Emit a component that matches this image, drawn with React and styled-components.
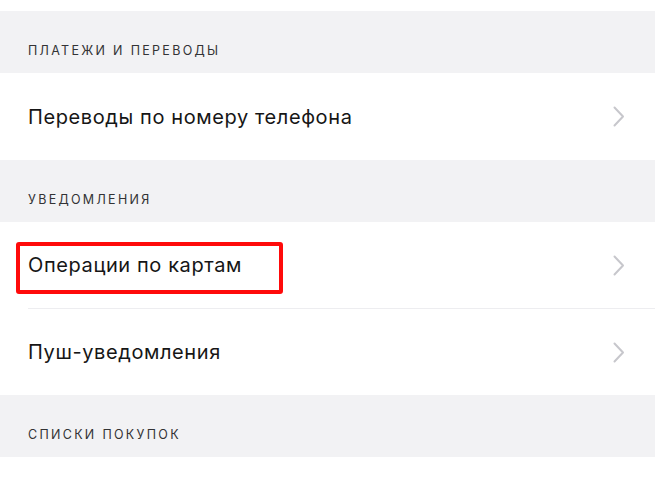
import React from "react";
import styled, {createGlobalStyle} from "styled-components";

const GlobalStyle = createGlobalStyle`
  html, body {
    margin: 0;
    padding: 0;
    background: #ffffff;
  }
  body {
    font-family: Inter, "Noto Sans", "Liberation Sans", sans-serif;
    -webkit-font-smoothing: antialiased;
  }
`

const Page = styled.div`
  width: 655px;
  height: 480px;
  overflow: hidden;
  padding-top: 11px;
  box-sizing: border-box;
  background: #ffffff;
`

const SectionHeader = styled.div`
  height: 62px;
  box-sizing: border-box;
  display: flex;
  align-items: flex-end;
  padding: 0 28px 14px;
  background: #f2f2f4;
  color: #333335;
  font-size: 12.5px;
  line-height: 16px;
  letter-spacing: 2.3px;
  text-transform: uppercase;
`

const Row = styled.div`
  height: ${p => p.$height || 86}px;
  display: flex;
  align-items: center;
  justify-content: space-between;
  padding: 0 30px 0 28px;
  box-sizing: border-box;
  background: #ffffff;
`

const Divider = styled.div`
  height: 1px;
  margin-left: 28px;
  background: #ededf0;
`

const Label = styled.span`
  position: relative;
  font-size: 20px;
  line-height: 24px;
  color: #161616;
  letter-spacing: 0.6px;
`

const Highlight = styled.span`
  position: absolute;
  left: -12px;
  top: -11px;
  width: 267px;
  height: 52px;
  box-sizing: border-box;
  border: 4px solid #ff0a0a;
  border-radius: 3px;
`

const Chevron = () => (
    <svg width="12" height="21" viewBox="0 0 12 21" fill="none">
        <path d="M1.5 1.5L10 10.5L1.5 19.5" stroke="#c7c7cc" strokeWidth="2" strokeLinecap="round" strokeLinejoin="round"/>
    </svg>
)

const Item = ({title, marked, height}) => (
    <Row $height={height}>
        <Label>
            {title}
            {marked && <Highlight/>}
        </Label>
        <Chevron/>
    </Row>
)

export default function App() {
    return (
        <Page>
            <GlobalStyle/>
            <SectionHeader>Платежи и переводы</SectionHeader>
            <Item title="Переводы по номеру телефона" height={87}/>
            <SectionHeader>Уведомления</SectionHeader>
            <Item title="Операции по картам" marked/>
            <Divider/>
            <Item title="Пуш-уведомления"/>
            <SectionHeader>Списки покупок</SectionHeader>
            <Row/>
        </Page>
    )
}
